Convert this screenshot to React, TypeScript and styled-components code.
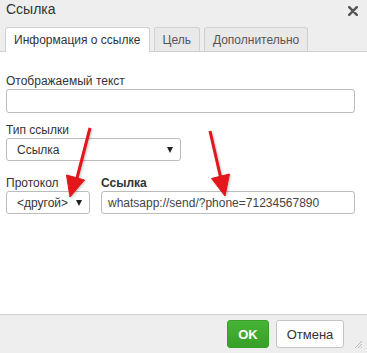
import React from "react";
import styled, { createGlobalStyle } from "styled-components";

const Global = createGlobalStyle`
  html, body { margin: 0; padding: 0; background: #fff; }
  body { font-family: "Liberation Sans", Arial, sans-serif; color: #333; }
`;

const Dialog = styled.div`
  position: relative;
  width: 367px;
  height: 353px;
  display: flex;
  flex-direction: column;
  background: #fff;
  overflow: hidden;
  font-family: "Liberation Sans", Arial, sans-serif;
`;

const Header = styled.div`
  background: #eeeeee;
  border-bottom: 1px solid #d1d1d1;
  height: 52px;
  box-sizing: border-box;
  display: flex;
  flex-direction: column;
`;

const TitleRow = styled.div`
  height: 28px;
  display: flex;
  align-items: flex-start;
  justify-content: space-between;
  padding: 1px 9px 0 6px;
  box-sizing: border-box;
`;

const Title = styled.div`
  font-size: 14px;
  line-height: 16px;
  color: #333;
`;

const CloseIcon = styled.svg`
  margin-top: 5px;
`;

const Tabs = styled.div`
  display: flex;
  gap: 4px;
  padding-left: 5px;
  height: 24px;
  align-items: stretch;
`;

const Tab = styled.div<{ $active?: boolean }>`
  padding: 0 8px;
  font-size: 12px;
  display: flex;
  align-items: center;
  border: 1px solid #d1d1d1;
  border-bottom: none;
  border-radius: 3px 3px 0 0;
  background: ${(p) => (p.$active ? "#fff" : "#e9e9e9")};
  color: ${(p) => (p.$active ? "#333" : "#555")};
  height: ${(p) => (p.$active ? "25px" : "24px")};
  box-sizing: border-box;
  position: relative;
  z-index: ${(p) => (p.$active ? 1 : 0)};
`;

const Body = styled.div`
  flex: 1;
  padding: 22px 12px 0 6px;
  display: flex;
  flex-direction: column;
`;

const Label = styled.div<{ $bold?: boolean }>`
  font-size: 12px;
  line-height: 14px;
  height: 14px;
  margin-bottom: 1px;
  font-weight: ${(p) => (p.$bold ? "bold" : "normal")};
  color: #333;
`;

const Field = styled.div<{ $mb?: number; $w?: number; $grow?: boolean }>`
  display: flex;
  flex-direction: column;
  margin-bottom: ${(p) => p.$mb ?? 0}px;
  width: ${(p) => (p.$w ? `${p.$w}px` : "auto")};
  flex: ${(p) => (p.$grow ? 1 : "none")};
`;

const Input = styled.div<{ $h?: number }>`
  height: ${(p) => p.$h ?? 23}px;
  border: 1px solid #bcbcbc;
  border-radius: 3px;
  box-sizing: border-box;
  background: #fff;
  font-size: 12px;
  color: #444;
  display: flex;
  align-items: center;
  padding-left: 6px;
`;

const Select = styled.div<{ $w: number }>`
  width: ${(p) => p.$w}px;
  height: 23px;
  border: 1px solid #bcbcbc;
  border-radius: 3px;
  box-sizing: border-box;
  background: #fff;
  font-size: 12px;
  color: #333;
  display: flex;
  align-items: center;
  justify-content: space-between;
  padding: 0 7px 0 10px;
`;

const Caret = styled.span`
  width: 0;
  height: 0;
  border-left: 3px solid transparent;
  border-right: 3px solid transparent;
  border-top: 6px solid #222;
`;

const Row = styled.div`
  display: flex;
  gap: 11px;
`;

const Footer = styled.div`
  height: 39px;
  background: #eeeeee;
  border-top: 1px solid #d1d1d1;
  box-sizing: border-box;
  display: flex;
  justify-content: flex-end;
  align-items: flex-start;
  padding: 5px 23px 0 0;
  gap: 7px;
`;

const Button = styled.div<{ $primary?: boolean; $w: number }>`
  width: ${(p) => p.$w}px;
  height: 28px;
  box-sizing: border-box;
  border-radius: 3px;
  display: flex;
  align-items: center;
  justify-content: center;
  font-size: 13px;
  font-weight: ${(p) => (p.$primary ? "bold" : "normal")};
  color: ${(p) => (p.$primary ? "#fff" : "#333")};
  background: ${(p) => (p.$primary ? "linear-gradient(#47b436, #389f28)" : "#fff")};
  border: 1px solid ${(p) => (p.$primary ? "#3a9c2b" : "#c4c4c4")};
`;

const Grip = styled.svg`
  position: absolute;
  right: 5px;
  bottom: 5px;
`;

const Overlay = styled.svg`
  position: absolute;
  left: 0;
  top: 0;
  pointer-events: none;
`;

export default function App() {
  return (
    <>
      <Global />
      <Dialog>
        <Header>
          <TitleRow>
            <Title>Ссылка</Title>
            <CloseIcon width="10" height="10" viewBox="0 0 10 10">
              <path d="M1.2 1.2 L8.8 8.8 M8.8 1.2 L1.2 8.8" stroke="#555" strokeWidth="2.4" strokeLinecap="round" />
            </CloseIcon>
          </TitleRow>
          <Tabs>
            <Tab $active>Информация о ссылке</Tab>
            <Tab>Цель</Tab>
            <Tab>Дополнительно</Tab>
          </Tabs>
        </Header>
        <Body>
          <Field $mb={10}>
            <Label>Отображаемый текст</Label>
            <Input $h={24} />
          </Field>
          <Field $mb={15}>
            <Label>Тип ссылки</Label>
            <Select $w={175}>
              <span>Ссылка</span>
              <Caret />
            </Select>
          </Field>
          <Row>
            <Field $w={84}>
              <Label>Протокол</Label>
              <Select $w={84}>
                <span>&lt;другой&gt;</span>
                <Caret />
              </Select>
            </Field>
            <Field $grow>
              <Label $bold>Ссылка</Label>
              <Input>whatsapp://send/?phone=71234567890</Input>
            </Field>
          </Row>
        </Body>
        <Footer>
          <Button $primary $w={42}>OK</Button>
          <Button $w={68}>Отмена</Button>
        </Footer>
        <Grip width="8" height="8" viewBox="0 0 8 8">
          <path d="M8 1 L1 8 M8 4 L4 8 M8 7 L7 8" stroke="#bbb" strokeWidth="1" />
        </Grip>
        <Overlay width="367" height="353" viewBox="0 0 367 353">
          <defs>
            <filter id="sh" x="-20%" y="-20%" width="140%" height="140%">
              <feDropShadow dx="1" dy="1" stdDeviation="1" floodColor="#000" floodOpacity="0.25" />
            </filter>
          </defs>
          <g fill="#e3141b" stroke="#e3141b" filter="url(#sh)">
            <line x1="90" y1="128" x2="76" y2="182" strokeWidth="3" />
            <polygon points="70,197 84.5,180 66.5,175" strokeWidth="1" />
            <line x1="210" y1="131" x2="221" y2="179" strokeWidth="3" />
            <polygon points="225,196 229.5,174 211.5,178.5" strokeWidth="1" />
          </g>
        </Overlay>
      </Dialog>
    </>
  );
}
